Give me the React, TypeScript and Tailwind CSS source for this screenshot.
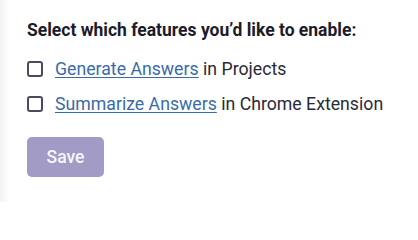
export default function App() {
  return (
    <div className="w-[418px] h-[202px] bg-white flex" style={{ fontFamily: "Roboto, 'Liberation Sans', sans-serif" }}>
      <div className="w-[10px] h-full bg-gradient-to-r from-[#f3f3f5] to-white" />
      <div className="flex flex-col pl-[17px] pt-[20px]">
        <h2 className="text-[17.5px] leading-[20px] font-bold text-[#1c1b29]">
          Select which features you’d like to enable:
        </h2>
        <div className="flex flex-col gap-[15px] mt-[19px]">
          <label className="flex items-center gap-[12px] text-[17.7px] leading-[20px] text-[#2a2938]">
            <span className="w-[16px] h-[16px] rounded-[3px] border-2 border-[#4c4a5e] bg-white" />
            <span>
              <a className="text-[#3a6ba8] underline underline-offset-2">Generate Answers</a> in Projects
            </span>
          </label>
          <label className="flex items-center gap-[12px] text-[17.7px] leading-[20px] text-[#2a2938]">
            <span className="w-[16px] h-[16px] rounded-[3px] border-2 border-[#4c4a5e] bg-white" />
            <span>
              <a className="text-[#3a6ba8] underline underline-offset-2">Summarize Answers</a> in Chrome Extension
            </span>
          </label>
        </div>
        <button className="mt-[23px] w-[77px] h-[40px] rounded-[5px] bg-[#a19bc6] text-[#f6f5fb] text-[17.5px] font-medium">
          Save
        </button>
      </div>
    </div>
  );
}
